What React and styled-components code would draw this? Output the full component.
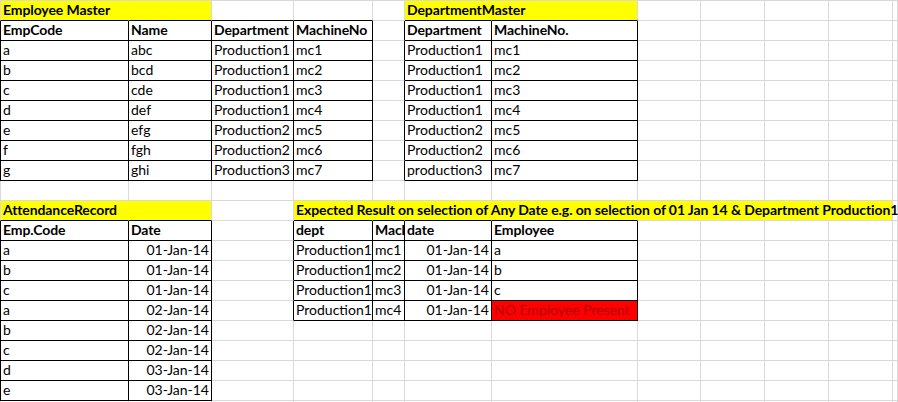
import React from "react";
import styled, { createGlobalStyle } from "styled-components";

const GRID = "#d9d9d9";
const INK = "#000000";
const YELLOW = "#ffff00";
const RED = "#ff0000";

const COLS = [129, 83, 82, 79, 32, 87, 146, 63, 64, 64, 64, 5];
const ROWS = [21, ...Array(19).fill(20), 1];

const Global = createGlobalStyle`
  html, body { margin: 0; padding: 0; background: #ffffff; }
  body { overflow: hidden; }
`;

const Sheet = styled.div`
  display: grid;
  grid-template-columns: ${COLS.map((w) => w + "px").join(" ")};
  grid-template-rows: ${ROWS.map((h) => h + "px").join(" ")};
  width: 898px;
  height: 402px;
  overflow: hidden;
  background: #ffffff;
  font-family: "Lato", "Liberation Sans", sans-serif;
  font-size: 14px;
  color: ${INK};
`;

const Cell = styled.div`
  box-sizing: border-box;
  display: flex;
  align-items: flex-end;
  justify-content: ${(p) => (p.$align === "right" ? "flex-end" : "flex-start")};
  padding: 0 2px 1px 2px;
  line-height: 18px;
  white-space: nowrap;
  background: ${(p) => p.$fill || "transparent"};
  color: ${(p) => p.$color || INK};
  font-weight: ${(p) => (p.$bold ? 700 : 400)};
  letter-spacing: ${(p) => (p.$bold ? "-0.1px" : "0")};
  border-right: 1px solid ${(p) => p.$r};
  border-bottom: 1px solid ${(p) => p.$b};
  border-left: ${(p) => (p.$l ? `1px solid ${p.$l}` : "none")};
  border-top: ${(p) => (p.$t ? `1px solid ${p.$t}` : "none")};
  overflow: ${(p) => (p.$spill ? "visible" : "hidden")};
  position: ${(p) => (p.$spill ? "relative" : "static")};
  z-index: ${(p) => (p.$spill ? 2 : "auto")};
`;

const TABLES = [
  [1, 8, 0, 3],
  [1, 8, 5, 6],
  [11, 19, 0, 1],
  [11, 15, 3, 6],
];

const inTable = (r, c) =>
  TABLES.some(([r0, r1, c0, c1]) => r >= r0 && r <= r1 && c >= c0 && c <= c1);

const fills = {};
const setFill = (r, c0, c1, color) => {
  for (let c = c0; c <= c1; c++) fills[`${r},${c}`] = color;
};
setFill(0, 0, 1, YELLOW);
setFill(0, 5, 6, YELLOW);
setFill(10, 0, 1, YELLOW);
setFill(10, 3, 10, YELLOW);
setFill(15, 6, 6, RED);

const content = {};
const put = (r, c, text, opts = {}) => {
  content[`${r},${c}`] = { text, ...opts };
};
const row = (r, c, values, opts = {}) =>
  values.forEach((v, i) => put(r, c + i, v, opts));

put(0, 0, "Employee Master", { bold: true, spill: true });
put(0, 5, "DepartmentMaster", { bold: true, spill: true });
row(1, 0, ["EmpCode", "Name", "Department", "MachineNo"], { bold: true });
row(1, 5, ["Department", "MachineNo."], { bold: true });

const employees = [
  ["a", "abc", "Production1", "mc1"],
  ["b", "bcd", "Production1", "mc2"],
  ["c", "cde", "Production1", "mc3"],
  ["d", "def", "Production1", "mc4"],
  ["e", "efg", "Production2", "mc5"],
  ["f", "fgh", "Production2", "mc6"],
  ["g", "ghi", "Production3", "mc7"],
];
const departments = [
  ["Production1", "mc1"],
  ["Production1", "mc2"],
  ["Production1", "mc3"],
  ["Production1", "mc4"],
  ["Production2", "mc5"],
  ["Production2", "mc6"],
  ["production3", "mc7"],
];
employees.forEach((v, i) => row(2 + i, 0, v));
departments.forEach((v, i) => row(2 + i, 5, v));

put(10, 0, "AttendanceRecord", { bold: true, spill: true });
put(
  10,
  3,
  "Expected Result on selection of Any Date e.g. on selection of 01 Jan 14 & Department Production1",
  { bold: true, spill: true }
);
row(11, 0, ["Emp.Code", "Date"], { bold: true });
row(11, 3, ["dept", "Machine", "date", "Employee"], { bold: true });

const attendance = [
  ["a", "01-Jan-14"],
  ["b", "01-Jan-14"],
  ["c", "01-Jan-14"],
  ["a", "02-Jan-14"],
  ["b", "02-Jan-14"],
  ["c", "02-Jan-14"],
  ["d", "03-Jan-14"],
  ["e", "03-Jan-14"],
];
attendance.forEach(([code, date], i) => {
  put(12 + i, 0, code);
  put(12 + i, 1, date, { align: "right" });
});

const results = [
  ["mc1", "a"],
  ["mc2", "b"],
  ["mc3", "c"],
  ["mc4", "NO Employee Present"],
];
results.forEach(([mc, emp], i) => {
  put(12 + i, 3, "Production1");
  put(12 + i, 4, mc);
  put(12 + i, 5, "01-Jan-14", { align: "right" });
  put(12 + i, 6, emp, i === 3 ? { color: "#b00000" } : {});
});

function edge(r, c, r2, c2) {
  if (inTable(r, c) || inTable(r2, c2)) return INK;
  const f = fills[`${r},${c}`];
  const f2 = fills[`${r2},${c2}`];
  if (f && f === f2) return f;
  return GRID;
}

export default function App() {
  const cells = [];
  ROWS.forEach((_, r) => {
    COLS.forEach((__, c) => {
      const key = `${r},${c}`;
      const data = content[key] || {};
      cells.push(
        <Cell
          key={key}
          $fill={fills[key]}
          $r={edge(r, c, r, c + 1)}
          $b={edge(r, c, r + 1, c)}
          $l={c === 0 ? (inTable(r, 0) ? INK : GRID) : null}
          $t={r === 0 ? GRID : null}
          $bold={data.bold}
          $align={data.align}
          $spill={data.spill}
          $color={data.color}
        >
          {data.text}
        </Cell>
      );
    });
  });
  return (
    <>
      <Global />
      <Sheet>{cells}</Sheet>
    </>
  );
}
